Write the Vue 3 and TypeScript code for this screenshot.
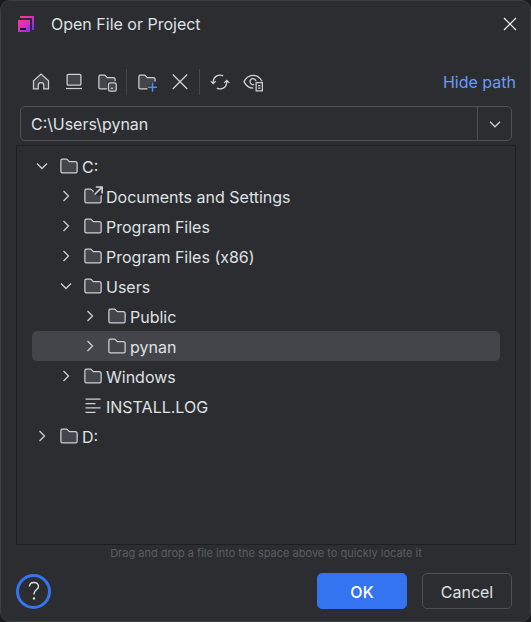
<script setup lang="ts">
import { computed, ref } from 'vue'

type NodeKind = 'folder' | 'link' | 'file'

interface TreeNode {
  id: string
  name: string
  kind: NodeKind
  expandable?: boolean
  children?: TreeNode[]
}

interface TreeRow {
  node: TreeNode
  level: number
}

const tree: TreeNode[] = [
  {
    id: 'C:\\',
    name: 'C:',
    kind: 'folder',
    expandable: true,
    children: [
      { id: 'C:\\Documents and Settings', name: 'Documents and Settings', kind: 'link', expandable: true },
      { id: 'C:\\Program Files', name: 'Program Files', kind: 'folder', expandable: true },
      { id: 'C:\\Program Files (x86)', name: 'Program Files (x86)', kind: 'folder', expandable: true },
      {
        id: 'C:\\Users',
        name: 'Users',
        kind: 'folder',
        expandable: true,
        children: [
          { id: 'C:\\Users\\Public', name: 'Public', kind: 'folder', expandable: true },
          { id: 'C:\\Users\\pynan', name: 'pynan', kind: 'folder', expandable: true },
        ],
      },
      { id: 'C:\\Windows', name: 'Windows', kind: 'folder', expandable: true },
      { id: 'C:\\INSTALL.LOG', name: 'INSTALL.LOG', kind: 'file' },
    ],
  },
  { id: 'D:\\', name: 'D:', kind: 'folder', expandable: true },
]

const path = ref('C:\\Users\\pynan')
const expanded = ref<string[]>(['C:\\', 'C:\\Users'])

function flatten(nodes: TreeNode[], level: number): TreeRow[] {
  return nodes.flatMap((node) => {
    const below = node.children && expanded.value.includes(node.id) ? flatten(node.children, level + 1) : []
    return [{ node, level }, ...below]
  })
}

const rows = computed(() => flatten(tree, 0))

function toggle(id: string) {
  expanded.value = expanded.value.includes(id)
    ? expanded.value.filter((item) => item !== id)
    : [...expanded.value, id]
}
</script>

<template>
  <main class="dialog" role="dialog" aria-labelledby="dialog-title">
    <header class="titlebar">
      <svg class="logo" viewBox="0 0 16 16" aria-hidden="true">
        <defs>
          <linearGradient id="logo-fill" gradientUnits="userSpaceOnUse" x1="1" y1="2" x2="14" y2="15">
            <stop offset="0.1" stop-color="#ff318c" />
            <stop offset="0.5" stop-color="#d42fc6" />
            <stop offset="1" stop-color="#7b2cff" />
          </linearGradient>
        </defs>
        <path d="M2 0H16V14H14V2H2Z" fill="url(#logo-fill)" />
        <path d="M0 4H12V16H0Z" fill="url(#logo-fill)" />
        <path d="M2 12H8V14H2Z" fill="#1b1020" />
      </svg>
      <h1 id="dialog-title" class="title">Open File or Project</h1>
      <button class="icon-button close" type="button" aria-label="Close">
        <svg viewBox="0 0 14 14" class="close-icon">
          <path d="M1 1L13 13M13 1L1 13" fill="none" stroke="#ffffff" stroke-width="1.2" />
        </svg>
      </button>
    </header>

    <div class="toolbar" role="toolbar" aria-label="Navigation">
      <button class="icon-button" type="button" aria-label="Home">
        <svg class="icon" viewBox="0 0 16 16">
          <path class="line shade" d="M2 7.1L8 1.7L14 7.1V13.5H10.2V10.6C10.2 9.3 9.3 8.5 8 8.5S5.8 9.3 5.8 10.6V13.5H2Z" />
        </svg>
      </button>
      <button class="icon-button" type="button" aria-label="Desktop">
        <svg class="icon" viewBox="0 0 16 16">
          <rect class="line shade" x="2.5" y="1.8" width="11" height="8.7" rx="1" />
          <path class="line" d="M1.6 13.2H14.4" />
        </svg>
      </button>
      <button class="icon-button" type="button" aria-label="Project directory">
        <svg class="icon" viewBox="0 0 16 16">
          <path class="line shade" d="M8 13.5H2.6C2 13.5 1.5 13 1.5 12.1V3.9C1.5 3 2 2.5 2.6 2.5H6.1C6.3 2.5 6.4 2.6 6.5 2.7L8.2 4.5H13C13.8 4.5 14.5 5.2 14.5 6V7.5" />
          <rect x="8" y="7.5" width="8" height="8.5" fill="#2b2d30" />
          <rect class="line shade" x="9.2" y="8.6" width="6.2" height="6.6" rx="1.3" />
          <path class="line" d="M11 13H12.8" />
        </svg>
      </button>
      <span class="separator"></span>
      <button class="icon-button" type="button" aria-label="New folder">
        <svg class="icon" viewBox="0 0 16 16">
          <path class="line shade" d="M8.5 13.5H2.6C2 13.5 1.5 13 1.5 12.1V3.9C1.5 3 2 2.5 2.6 2.5H6.1C6.3 2.5 6.4 2.6 6.5 2.7L8.2 4.5H13C13.8 4.5 14.5 5.2 14.5 6V7.5" />
          <path d="M8.6 10.5H11V8H16V16H8.6Z" fill="#2b2d30" />
          <path d="M12.4 8.4V15.8M8.7 12.1H16" fill="none" stroke="#548af7" stroke-width="1.2" />
        </svg>
      </button>
      <button class="icon-button" type="button" aria-label="Delete">
        <svg class="icon" viewBox="0 0 16 16">
          <path class="line" d="M2.2 2L13.8 13.6M13.8 2L2.2 13.6" />
        </svg>
      </button>
      <span class="separator"></span>
      <button class="icon-button" type="button" aria-label="Refresh">
        <svg class="icon" viewBox="0 0 16 16">
          <path class="line" d="M5.5 12.9A5.4 5.4 0 0 0 13.4 8.7V6.7M10.5 3.1A5.4 5.4 0 0 0 2.6 7.3V9.3M0.6 7.3L2.6 9.3L4.6 7.3M11.4 8.7L13.4 6.7L15.4 8.7" />
        </svg>
      </button>
      <button class="icon-button" type="button" aria-label="Show hidden files">
        <svg class="icon" viewBox="0 0 16 16">
          <path class="line" d="M8.2 12.9C4.6 12.9 2.2 10.6 0.8 7.7C2.2 4.8 4.6 2.6 8 2.6S13.8 4.8 15.2 7.4M9 9.9A2.4 2.4 0 1 1 10.4 7.4" />
          <rect class="line" x="10.5" y="8.5" width="5" height="6.6" />
          <path class="line" d="M12 10.8H14M12 12.9H14" />
        </svg>
      </button>
      <a class="path-link" href="#path">Hide path</a>
    </div>

    <div class="path-field">
      <input id="path" v-model="path" class="path-input" type="text" aria-label="Path" spellcheck="false" />
      <button class="path-history" type="button" aria-label="Recent paths">
        <svg class="icon" viewBox="0 0 16 16">
          <path class="line" d="M4 6.2L8 10.2L12 6.2" />
        </svg>
      </button>
    </div>

    <ul class="tree" role="tree" aria-label="Files">
      <li
        v-for="row in rows"
        :key="row.node.id"
        class="row"
        :class="[`level-${row.level}`, { selected: row.node.id === path }]"
        role="treeitem"
        :aria-level="row.level + 1"
        :aria-selected="row.node.id === path"
        @click="path = row.node.id"
      >
        <button
          v-if="row.node.expandable"
          class="icon-button"
          type="button"
          :aria-label="`Toggle ${row.node.name}`"
          :aria-expanded="expanded.includes(row.node.id)"
          @click.stop="toggle(row.node.id)"
        >
          <svg class="icon" viewBox="0 0 16 16">
            <path v-if="expanded.includes(row.node.id)" class="line" d="M4 6L8 10L12 6" />
            <path v-else class="line" d="M6 4L10 8L6 12" />
          </svg>
        </button>
        <span v-else class="icon"></span>
        <svg class="icon kind" viewBox="0 0 16 16" aria-hidden="true">
          <path v-if="row.node.kind === 'file'" class="line" d="M2 2.5H14M2 6H10M2 9.5H14M2 13H10" />
          <template v-else-if="row.node.kind === 'link'">
            <path class="line shade" d="M8.6 4.5L6.5 2.7C6.4 2.6 6.3 2.5 6.1 2.5H2.6C2 2.5 1.5 3 1.5 3.9V12.1C1.5 13 2 13.5 2.6 13.5H13.4C14 13.5 14.5 13 14.5 12.1V7" />
            <path d="M8.8 6L11 0H16V7L12 8Z" fill="#2b2d30" />
            <path class="line arrow" d="M9.3 6.8L15 1.1M10.2 0.8H15.3V5.9" />
          </template>
          <path v-else class="line shade" d="M8.1 4.3L8.3 4.5H13C13.8 4.5 14.5 5.2 14.5 6V12.1C14.5 13 13.9 13.5 13.4 13.5H2.6C2.1 13.5 1.5 13 1.5 12.1V3.9C1.5 3 2.1 2.5 2.6 2.5H6.1C6.3 2.5 6.4 2.6 6.5 2.7Z" />
        </svg>
        <span class="name">{{ row.node.name }}</span>
      </li>
    </ul>

    <p class="hint">Drag and drop a file into the space above to quickly locate it</p>

    <footer class="actions">
      <button class="help" type="button" aria-label="Help">
        <svg class="help-icon" viewBox="0 0 12 20" aria-hidden="true">
          <path d="M1.5 5.5C1.5 3 3.4 1.5 6 1.5S10.5 3 10.5 5.4C10.5 8.6 6 8.9 6 12.6V13.5" fill="none" stroke="#dfe1e5" stroke-width="1.4" />
          <circle cx="6" cy="17.4" r="1.2" fill="#dfe1e5" />
        </svg>
      </button>
      <button class="button primary" type="button">OK</button>
      <button class="button" type="button">Cancel</button>
    </footer>
  </main>
</template>

<style>
body {
  margin: 0;
  background: #1a1b1e;
}
</style>

<style scoped>
.dialog {
  box-sizing: border-box;
  display: flex;
  flex-direction: column;
  min-height: 100vh;
  padding: 0 14px 12px 15px;
  border: 1px solid #3c3e42;
  border-radius: 10px;
  background: #2b2d30;
  color: #dfe1e5;
  font-family: Inter, "Liberation Sans", sans-serif;
  font-size: 16px;
  line-height: 20px;
}

button,
input {
  margin: 0;
  padding: 0;
  border: 0;
  background: none;
  color: inherit;
  font: inherit;
}

.icon-button {
  display: flex;
  flex: none;
}

.icon {
  display: block;
  flex: none;
  width: 20px;
  height: 20px;
}

.line {
  fill: none;
  stroke: #ced0d6;
}

.shade {
  fill: #43454a;
}

.titlebar {
  display: flex;
  align-items: center;
  height: 46px;
  padding-left: 2px;
}

.logo {
  width: 16px;
  height: 16px;
}

.title {
  flex: 1;
  margin: 0 0 0 17px;
  font-size: 16px;
  font-weight: 400;
}

.close-icon {
  width: 14px;
  height: 14px;
}

.close {
  margin-right: -1px;
}

.toolbar {
  display: flex;
  align-items: center;
  gap: 13px;
  height: 26px;
  margin: 22px 0 11px;
  padding-left: 15px;
}

.separator {
  width: 1px;
  height: 26px;
  margin: 0 -3px 0 -4px;
  background: #43454a;
}

.path-link {
  margin-left: auto;
  color: #6b9bfa;
  text-decoration: none;
}

.path-field {
  display: flex;
  height: 33px;
  margin: 0 4px 4px;
  border: 1px solid #4e5157;
  border-radius: 5px;
}

.path-input {
  flex: 1;
  min-width: 0;
  padding: 0 10px;
  outline: none;
}

.path-history {
  display: flex;
  align-items: center;
  justify-content: center;
  width: 34px;
  border-left: 1px solid #4e5157;
}

.tree {
  flex: 1;
  margin: 0;
  padding: 5px 15px;
  border: 1px solid #1e1f22;
  list-style: none;
}

.row {
  display: flex;
  align-items: center;
  height: 30px;
  border-radius: 5px;
}

.level-1 {
  padding-left: 24px;
}

.level-2 {
  padding-left: 48px;
}

.selected {
  background: #43454a;
}

.kind {
  margin: 0 3px 0 7px;
}

.name {
  padding-top: 2px;
}

.arrow {
  stroke-width: 1.3;
}

.hint {
  margin: 0;
  color: #5a5d63;
  font-size: 11px;
  line-height: 16px;
  text-align: center;
}

.actions {
  display: flex;
  align-items: center;
  gap: 15px;
  margin-top: 12px;
  padding-right: 4px;
}

.help {
  display: flex;
  align-items: center;
  justify-content: center;
  width: 35px;
  height: 35px;
  margin-right: auto;
  border: 3px solid #3574f0;
  border-radius: 50%;
}

.help-icon {
  width: 12px;
  height: 20px;
}

.button {
  box-sizing: border-box;
  width: 90px;
  height: 36px;
  padding-top: 2px;
  border: 1px solid #4e5157;
  border-radius: 5px;
}

.primary {
  border-color: #3574f0;
  background: #3574f0;
  color: #ffffff;
  font-weight: 500;
}
</style>
